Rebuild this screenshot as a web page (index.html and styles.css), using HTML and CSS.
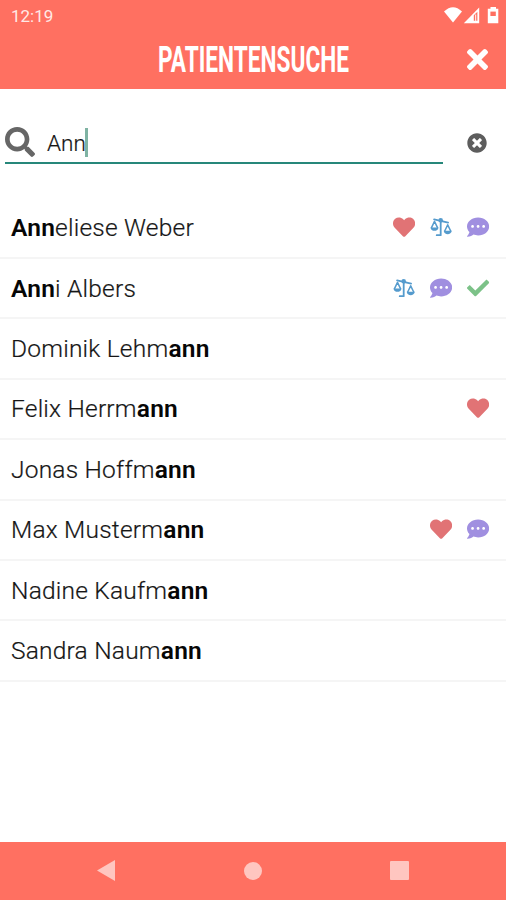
FILE: index.html
```html
<!DOCTYPE html>
<html lang="de">
<head>
<meta charset="utf-8">
<title>Patientensuche</title>
<link rel="stylesheet" href="styles.css">
</head>
<body>
<svg class="defs" width="0" height="0">
  <symbol id="heart" viewBox="0 0 512 512"><path d="M462.3 62.6C407.5 15.9 326 24.3 275.7 76.2L256 96.5l-19.7-20.3C186.1 24.3 104.5 15.9 49.7 62.6c-62.8 53.6-66.1 149.8-9.9 207.9l193.5 199.8c12.5 12.9 32.8 12.9 45.3 0l193.5-199.8c56.3-58.1 53-154.3-9.8-207.9z"/></symbol>
  <symbol id="chat" viewBox="0 0 512 512"><path d="M256 32C114.6 32 0 125.1 0 240c0 49.6 21.4 95 57 130.7C44.5 421.1 2.7 466 2.2 466.5c-2.2 2.3-2.8 5.7-1.5 8.7S4.8 480 8 480c66.3 0 116-31.8 140.6-51.4 32.7 12.3 69 19.4 107.4 19.4 141.4 0 256-93.1 256-208S397.4 32 256 32zM128 272c-17.7 0-32-14.3-32-32s14.3-32 32-32 32 14.3 32 32-14.3 32-32 32zm128 0c-17.7 0-32-14.3-32-32s14.3-32 32-32 32 14.3 32 32-14.3 32-32 32zm128 0c-17.7 0-32-14.3-32-32s14.3-32 32-32 32 14.3 32 32-14.3 32-32 32z"/></symbol>
  <symbol id="check" viewBox="0 0 512 512"><path d="M173.9 439.4l-166.4-166.4c-10-10-10-26.2 0-36.2l36.2-36.2c10-10 26.2-10 36.2 0L192 312.7 432.1 72.6c10-10 26.2-10 36.2 0l36.2 36.2c10 10 10 26.2 0 36.2l-294.4 294.4c-10 10-26.2 10-36.2 0z"/></symbol>
  <symbol id="scale" viewBox="0 0 22 20"><g fill="none" stroke="currentColor" stroke-width="1.8" stroke-linecap="round" stroke-linejoin="round"><path d="M4 2.4L18 5.6M10.6 4V18.2H6.6"/><path d="M1.4 10.6L4.4 4.4L7.4 10.6M14.6 14L17.6 7.8L20.6 14" stroke-width="1.5"/></g><circle cx="10.6" cy="3.2" r="2.3"/><path d="M.4 10.4H8.4C8.2 15 .6 15 .4 10.4ZM13.6 13.8H21.6C21.4 18.4 13.8 18.4 13.6 13.8Z"/></symbol>
</svg>
<div class="screen">
  <header class="top">
    <div class="status">
      <span class="time">12:19</span>
      <svg class="status-icons" width="56" height="20" viewBox="0 0 56 20" fill="#fff"><path d="M0 4.600Q9-4.200 18 4.600L9 15.600Z"/><path d="M19.800 16.200L35.200.6V16.200Z"/><path d="M29.800 8.200L33.400 4.800V13.800H29.800Z" fill="#ff7061"/><path d="M31 7.500H32.200V14H31Z" fill="#ffe4e0"/><path d="M46.500 0H52V1.800H54.300V16.200H43.800V1.800H46.500Z"/><path d="M46.400 4.600H51.800V9H46.400Z" fill="#ff7061"/></svg>
    </div>
    <div class="titlebar">
      <h1><svg class="title" width="194" height="34"><text x="2" y="29.500" textLength="191" lengthAdjust="spacingAndGlyphs">PATIENTENSUCHE</text></svg></h1>
      <svg class="close" viewBox="0 0 352 512"><path d="M242.72 256l100.07-100.07c12.28-12.28 12.28-32.19 0-44.48l-22.24-22.24c-12.28-12.28-32.19-12.28-44.48 0L176 189.28 75.93 89.21c-12.28-12.28-32.19-12.28-44.48 0L9.21 111.45c-12.28 12.28-12.28 32.19 0 44.48L109.28 256 9.21 356.07c-12.28 12.28-12.28 32.19 0 44.48l22.24 22.24c12.28 12.28 32.2 12.28 44.48 0L176 322.72l100.07 100.07c12.28 12.28 32.2 12.28 44.48 0l22.24-22.24c12.28-12.28 12.28-32.19 0-44.48L242.72 256z"/></svg>
    </div>
  </header>
  <div class="search">
    <div class="field">
      <svg class="lens" viewBox="0 0 512 512"><path d="M505 442.7L405.3 343c-4.5-4.5-10.6-7-17-7H372c27.6-35.3 44-79.7 44-128C416 93.1 322.9 0 208 0S0 93.1 0 208s93.1 208 208 208c48.3 0 92.7-16.4 128-44v16.3c0 6.4 2.5 12.5 7 17l99.7 99.7c9.4 9.4 24.6 9.4 33.9 0l28.3-28.3c9.4-9.4 9.4-24.6.1-34zM208 336c-70.7 0-128-57.2-128-128 0-70.7 57.2-128 128-128 70.7 0 128 57.2 128 128 0 70.7-57.2 128-128 128z"/></svg>
      <span class="query">Ann</span><span class="caret"></span>
    </div>
    <svg class="clear" viewBox="0 0 512 512"><path d="M256 8C119 8 8 119 8 256s111 248 248 248 248-111 248-248S393 8 256 8zm121.600 313.100c4.700 4.700 4.700 12.300 0 17L338 377.600c-4.700 4.700-12.300 4.700-17 0L256 312l-65.100 65.600c-4.700 4.700-12.300 4.700-17 0L134.400 338c-4.700-4.700-4.700-12.300 0-17l65.600-65-65.600-65.100c-4.700-4.700-4.700-12.300 0-17l39.600-39.600c4.700-4.700 12.300-4.700 17 0l65 65.700 65.100-65.600c4.700-4.700 12.300-4.700 17 0l39.600 39.600c4.700 4.700 4.700 12.300 0 17L312 256l65.600 65.100z"/></svg>
  </div>
  <ul class="list">
    <li><span class="name"><b>Ann</b>eliese Weber</span><span class="icons"><svg class="heart"><use href="#heart"/></svg><svg class="scale"><use href="#scale"/></svg><svg class="chat"><use href="#chat"/></svg></span></li>
    <li><span class="name"><b>Ann</b>i Albers</span><span class="icons"><svg class="scale"><use href="#scale"/></svg><svg class="chat"><use href="#chat"/></svg><svg class="check"><use href="#check"/></svg></span></li>
    <li><span class="name">Dominik Lehm<b>ann</b></span></li>
    <li><span class="name">Felix Herrm<b>ann</b></span><span class="icons"><svg class="heart"><use href="#heart"/></svg></span></li>
    <li><span class="name">Jonas Hoffm<b>ann</b></span></li>
    <li><span class="name">Max Musterm<b>ann</b></span><span class="icons"><svg class="heart"><use href="#heart"/></svg><svg class="chat"><use href="#chat"/></svg></span></li>
    <li><span class="name">Nadine Kaufm<b>ann</b></span></li>
    <li><span class="name">Sandra Naum<b>ann</b></span></li>
  </ul>
  <nav class="nav">
    <svg width="18" height="21" viewBox="0 0 18 21"><path d="M0 10.500L18 0V21Z"/></svg>
    <svg width="18" height="18" viewBox="0 0 18 18"><circle cx="9" cy="9" r="9"/></svg>
    <svg width="19" height="19" viewBox="0 0 19 19"><rect width="19" height="19" rx="1"/></svg>
  </nav>
</div>
</body>
</html>
```

FILE: styles.css
```css
* { box-sizing: border-box; }
body { margin: 0; background: #fff; font-family: Roboto, sans-serif; color: #161616; }
.defs { display: block; height: 0; }
.screen { width: 506px; height: 900px; display: flex; flex-direction: column; overflow: hidden; }
.top { height: 88.5px; background: #ff7061; flex: none; }
.status { height: 32px; display: flex; justify-content: space-between; padding: 7px 6px 0 11px; }
.time { font-size: 17px; line-height: 19px; color: #ffe9e6; }
.status-icons { display: block; }
.titlebar { height: 56px; display: grid; grid-template-columns: 1fr 194px 1fr; align-items: center; }
h1 { grid-column: 2; margin: 0; height: 36px; }
.title { display: block; overflow: visible; }
.title text { font: 700 36.5px Roboto, sans-serif; fill: #fff; }
.close { width: 21px; height: 31px; fill: #fff; justify-self: end; margin: -2px 18px 0 0; }
.search { height: 110px; flex: none; display: flex; padding: 34px 19px 0 5px; justify-content: space-between; }
.field { width: 438px; height: 41.500px; border-bottom: 2px solid #26877a; display: flex; align-items: center; }
.lens { width: 30px; height: 30px; fill: #666; }
.query { margin: 2px 0 0 12px; font-size: 22.500px; font-weight: 300; -webkit-text-stroke: .2px #161616; }
.caret { width: 3px; height: 29px; background: #7fb3a3; margin-left: -1px; }
.clear { width: 20px; height: 20px; margin-top: 10px; fill: #5d5d5d; }
.list { margin: 0; padding: 0; list-style: none; flex: 1; }
.list li { height: 60.430px; border-bottom: 2px solid #f5f5f5; padding: 0 16.500px 0 11px; display: flex; align-items: center; justify-content: space-between; }
.name { font-size: 24.500px; font-weight: 300; letter-spacing: .22px; white-space: nowrap; -webkit-text-stroke: .2px #161616; }
.name b { font-weight: 600; color: #060606; -webkit-text-stroke: 0; }
.icons { display: flex; gap: 15px; align-items: center; margin-top: -1px; }
.icons svg { width: 22.200px; height: 22.200px; fill: currentColor; }
.icons .scale { height: 20px; color: #559bcd; }
.heart { color: #e17375; }
.chat { color: #a08fe0; }
.check { color: #7cc288; }
.nav { height: 58.500px; flex: none; background: #ff7061; display: flex; align-items: center; justify-content: space-between; padding: 0 97px; }
.nav svg { fill: #ffc6c0; display: block; }
```
